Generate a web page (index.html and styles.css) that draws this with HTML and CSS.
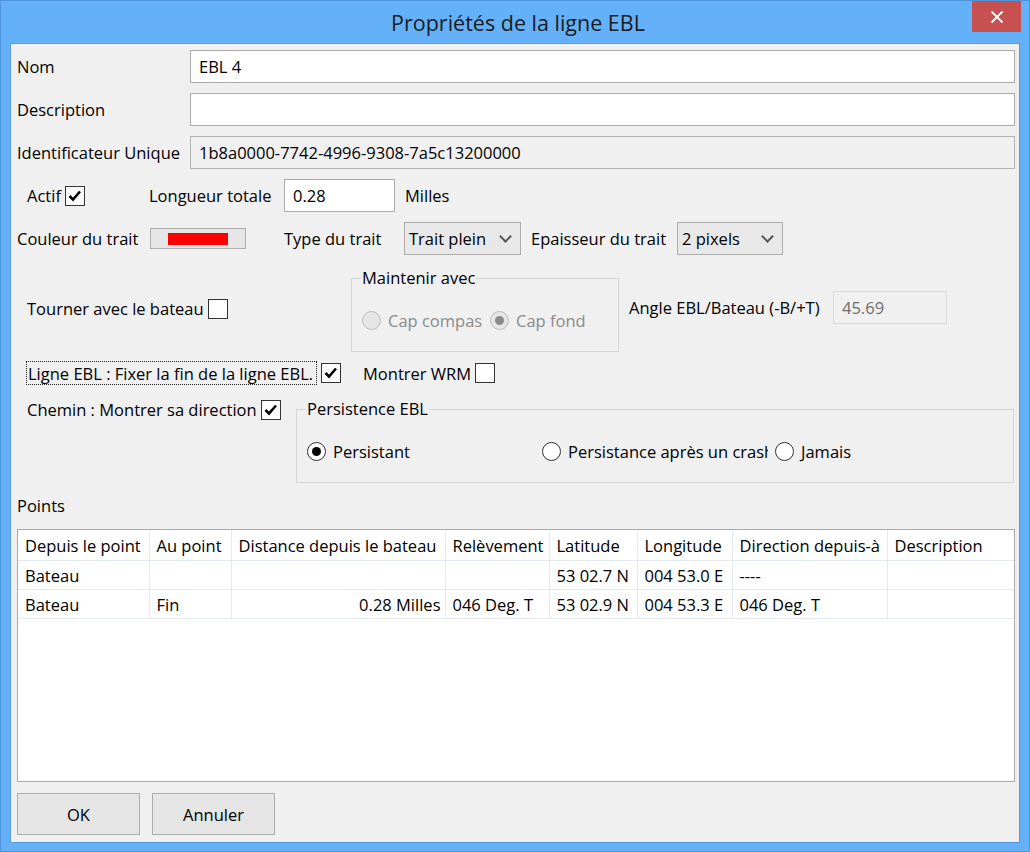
FILE: index.html
```html
<!DOCTYPE html>
<html lang="fr">
  <head>
    <meta charset="UTF-8">
    <title>Propriétés de la ligne EBL</title>
    <link rel="stylesheet" href="styles.css">
  </head>
  <body>
    <div class="window">
      <div class="titlebar">
        <span class="title">Propriétés de la ligne EBL</span>
        <div class="close">
          <svg width="14" height="14" viewBox="0 0 14 14">
            <path d="M1.5 1.5 L12.5 12.5 M12.5 1.5 L1.5 12.5" stroke="#fff" stroke-width="1.8" />
          </svg>
        </div>
      </div>

      <div class="client">
        <div class="field">
          <span class="field__label">Nom</span>
          <div class="input">EBL 4</div>
        </div>
        <div class="field">
          <span class="field__label">Description</span>
          <div class="input"></div>
        </div>
        <div class="field">
          <span class="field__label">Identificateur Unique</span>
          <div class="input input--readonly">1b8a0000-7742-4996-9308-7a5c13200000</div>
        </div>

        <div class="row row--actif">
          <span class="check-label">Actif <span class="box box--checked"></span></span>
          <span class="lbl lbl--longueur">Longueur totale</span>
          <div class="input input--short">0.28</div>
          <span class="lbl lbl--unit">Milles</span>
        </div>

        <div class="row row--couleur">
          <span class="lbl lbl--couleur">Couleur du trait</span>
          <div class="color-btn"><span class="swatch"></span></div>
          <span class="lbl lbl--type">Type du trait</span>
          <div class="select select--type">Trait plein <span class="chev"></span></div>
          <span class="lbl lbl--epais">Epaisseur du trait</span>
          <div class="select select--epais">2 pixels <span class="chev"></span></div>
        </div>

        <div class="row row--tourner">
          <div class="tourner">
            <span class="check-label">Tourner avec le bateau <span class="box"></span></span>
          </div>
          <fieldset class="group group--maintenir">
            <legend>Maintenir avec</legend>
            <div class="radios">
              <span class="radio-label radio-label--off radio-label--compas"><span class="radio radio--off"></span><span class="clip clip--compas">Cap compas</span></span>
              <span class="radio-label radio-label--off"><span class="radio radio--off radio--on"></span>Cap fond</span>
            </div>
          </fieldset>
          <div class="angle">
            <span class="lbl lbl--angle">Angle EBL/Bateau (-B/+T)</span>
            <div class="input input--disabled">45.69</div>
          </div>
        </div>

        <div class="row row--ligne">
          <span class="focus">Ligne EBL : Fixer la fin de la ligne EBL.</span>
          <span class="box box--checked"></span>
          <span class="check-label check-label--wrm">Montrer WRM <span class="box"></span></span>
        </div>

        <div class="row row--chemin">
          <div class="chemin">
            <span class="check-label">Chemin : Montrer sa direction <span class="box box--checked"></span></span>
          </div>
          <fieldset class="group group--persist">
            <legend>Persistence EBL</legend>
            <div class="radios radios--persist">
              <span class="radio-label radio-label--persist"><span class="radio radio--on"></span>Persistant</span>
              <span class="radio-label radio-label--crash"><span class="radio"></span><span class="clip clip--crash">Persistance après un crash</span></span>
              <span class="radio-label"><span class="radio"></span>Jamais</span>
            </div>
          </fieldset>
        </div>

        <div class="points-label">Points</div>

        <div class="grid">
          <table>
            <colgroup>
              <col style="width: 131px">
              <col style="width: 82px">
              <col style="width: 214px">
              <col style="width: 104px">
              <col style="width: 88px">
              <col style="width: 95px">
              <col style="width: 155px">
              <col>
            </colgroup>
            <thead>
              <tr>
                <th>Depuis le point</th>
                <th>Au point</th>
                <th>Distance depuis le bateau</th>
                <th>Relèvement</th>
                <th>Latitude</th>
                <th>Longitude</th>
                <th>Direction depuis-à</th>
                <th>Description</th>
              </tr>
            </thead>
            <tbody>
              <tr>
                <td>Bateau</td>
                <td></td>
                <td></td>
                <td></td>
                <td>53 02.7 N</td>
                <td>004 53.0 E</td>
                <td>----</td>
                <td></td>
              </tr>
              <tr>
                <td>Bateau</td>
                <td>Fin</td>
                <td class="num">0.28 Milles</td>
                <td>046 Deg. T</td>
                <td>53 02.9 N</td>
                <td>004 53.3 E</td>
                <td>046 Deg. T</td>
                <td></td>
              </tr>
            </tbody>
          </table>
        </div>

        <div class="buttons">
          <div class="btn">OK</div>
          <div class="btn">Annuler</div>
        </div>
      </div>
    </div>
  </body>
</html>
```

FILE: styles.css
```css
html,
body {
  margin: 0;
  width: 1030px;
  height: 852px;
}

body {
  font-family: "Open Sans", "Noto Sans", sans-serif;
  font-size: 16.5px;
  color: #000;
}

.window {
  box-sizing: border-box;
  width: 1030px;
  height: 852px;
  border: 1px solid #4f95dc;
  background-color: #64b1fa;
  display: flex;
  flex-direction: column;
}

.titlebar {
  height: 42px;
  display: flex;
  align-items: center;
  justify-content: center;
  position: relative;
}

.title {
  font-size: 21.5px;
  color: #1b1b1b;
  margin-left: 6px;
}

.close {
  position: absolute;
  top: 0;
  right: 8px;
  width: 49px;
  height: 31px;
  background-color: #c75050;
  display: flex;
  align-items: center;
  justify-content: center;
}

.client {
  box-sizing: border-box;
  height: 800px;
  margin: 0 9px;
  border: 1px solid #5a99d8;
  background-color: #f0f0f0;
  padding: 6px 4px 0 6px;
  display: flex;
  flex-direction: column;
}

/* text rows */

.field {
  display: flex;
  align-items: center;
  height: 33px;
  margin-bottom: 10px;
}

.field__label {
  width: 173px;
  flex: none;
}

.input {
  box-sizing: border-box;
  flex: 1;
  height: 33px;
  border: 1px solid #ababab;
  background-color: #fff;
  padding: 0 8px;
  display: flex;
  align-items: center;
}

.input--readonly {
  background-color: #f0f0f0;
  border-color: #b4b4b4;
}

.input--short {
  flex: none;
  width: 111px;
}

.input--disabled {
  flex: none;
  width: 114px;
  background-color: #f0f0f0;
  border-color: #d9d9d9;
  color: #6d6d6d;
}

.row {
  display: flex;
  align-items: center;
}

.lbl {
  white-space: nowrap;
}

.row--actif {
  height: 33px;
  margin-bottom: 10px;
}

.row--actif .check-label {
  margin-left: 10px;
  width: 122px;
}

.lbl--longueur {
  width: 135px;
}

.lbl--unit {
  margin-left: 10px;
}

.check-label {
  display: flex;
  align-items: center;
  gap: 4px;
  white-space: nowrap;
}

.box {
  box-sizing: border-box;
  display: inline-block;
  width: 20px;
  height: 20px;
  border: 1px solid #333;
  background-color: #fff;
  flex: none;
}

.box--checked {
  background: #fff url("data:image/svg+xml,%3Csvg xmlns='http://www.w3.org/2000/svg' width='18' height='18'%3E%3Cpath d='M3.5 9 L7 12.5 L14 4.5' fill='none' stroke='%23000' stroke-width='2.6'/%3E%3C/svg%3E") center no-repeat;
}

.row--couleur {
  height: 33px;
}

.lbl--couleur {
  width: 133px;
}

.color-btn {
  box-sizing: border-box;
  width: 96px;
  height: 21px;
  border: 1px solid #acacac;
  background-color: #e6e6e6;
  display: flex;
  align-items: center;
  justify-content: center;
  margin-right: 38px;
}

.swatch {
  width: 60px;
  height: 12px;
  background-color: #f00;
}

.lbl--type {
  width: 120px;
}

.select {
  box-sizing: border-box;
  height: 33px;
  border: 1px solid #acacac;
  background-color: #e8e8e8;
  padding: 0 4px;
  display: flex;
  align-items: center;
  justify-content: space-between;
}

.select--type {
  width: 117px;
  margin-right: 10px;
}

.select--epais {
  width: 106px;
}

.lbl--epais {
  width: 146px;
}

.chev {
  width: 7px;
  height: 7px;
  margin: 0 6px 4px 0;
  border-right: 2px solid #555;
  border-bottom: 2px solid #555;
  transform: rotate(45deg);
}

/* group boxes */

.row--tourner {
  align-items: flex-start;
  height: 84px;
  margin-top: 13px;
}

.tourner {
  width: 334px;
  padding-top: 29px;
}

.tourner .check-label,
.chemin .check-label {
  margin-left: 10px;
}

.group {
  box-sizing: border-box;
  margin: 0;
  border: 1px solid #d5d5d5;
  padding: 0 0 0 10px;
}

.group legend {
  padding: 0 1px;
  margin-left: -1px;
  line-height: 20px;
}

.group--maintenir {
  width: 268px;
  height: 84px;
}

.radios {
  display: flex;
  align-items: center;
  margin-top: 21px;
}

.radio-label {
  display: flex;
  align-items: center;
  gap: 7px;
  white-space: nowrap;
}

.radio-label--off {
  color: #8a8a8a;
}

.radio-label--compas {
  width: 128px;
}

.clip {
  overflow: hidden;
  display: inline-block;
}

.clip--compas {
  width: 94px;
}

.radio {
  box-sizing: border-box;
  width: 19px;
  height: 19px;
  border-radius: 50%;
  border: 1px solid #333;
  background-color: #fff;
  flex: none;
  position: relative;
}

.radio--on::after {
  content: "";
  position: absolute;
  left: 4px;
  top: 4px;
  width: 9px;
  height: 9px;
  border-radius: 50%;
  background-color: #000;
}

.radio--off {
  border-color: #bcbcbc;
  background-color: #e6e6e6;
}

.radio--off.radio--on::after {
  background-color: #8a8a8a;
}

.angle {
  display: flex;
  align-items: center;
  gap: 6px;
  margin-left: 10px;
  margin-top: 23px;
}

.lbl--angle {
  width: 198px;
}

.row--ligne {
  height: 24px;
  margin-top: 9px;
}

.focus {
  box-sizing: border-box;
  height: 24px;
  margin-left: 9px;
  padding: 0 0 0 1px;
  border: 1px dotted #222;
  display: flex;
  align-items: center;
  white-space: nowrap;
  overflow: hidden;
  width: 291px;
  margin-right: 4px;
}

.check-label--wrm {
  margin-left: 22px;
}

.row--chemin {
  align-items: flex-start;
  height: 84px;
  margin-top: 14px;
}

.chemin {
  width: 279px;
  margin-top: -1px;
}

.group--persist {
  width: 718px;
  height: 84px;
}

.radios--persist {
  margin-top: 21px;
}

.radio-label--persist {
  width: 235px;
}

.radio-label--crash {
  width: 233px;
}

.clip--crash {
  width: 200px;
}

.points-label {
  margin-top: 13px;
  height: 20px;
  line-height: 20px;
}

/* table */

.grid {
  box-sizing: border-box;
  height: 253px;
  margin-top: 13px;
  border: 1px solid #a9a9a9;
  background-color: #fff;
  overflow: hidden;
}

table {
  border-collapse: collapse;
  table-layout: fixed;
  width: 100%;
}

th,
td {
  text-align: left;
  font-weight: normal;
  padding: 0 4px 0 7px;
  white-space: nowrap;
  overflow: hidden;
  border-right: 1px solid #e3e9f0;
  border-bottom: 1px solid #e3e9f0;
}

th {
  height: 30px;
}

td {
  height: 28px;
}

td.num {
  text-align: right;
  padding-right: 4px;
}

th:last-child,
td:last-child {
  border-right: none;
}

/* buttons */

.buttons {
  display: flex;
  gap: 12px;
  margin-top: 11px;
}

.btn {
  box-sizing: border-box;
  width: 123px;
  height: 42px;
  border: 1px solid #acacac;
  background-color: #e5e5e5;
  display: flex;
  align-items: center;
  justify-content: center;
}
```
